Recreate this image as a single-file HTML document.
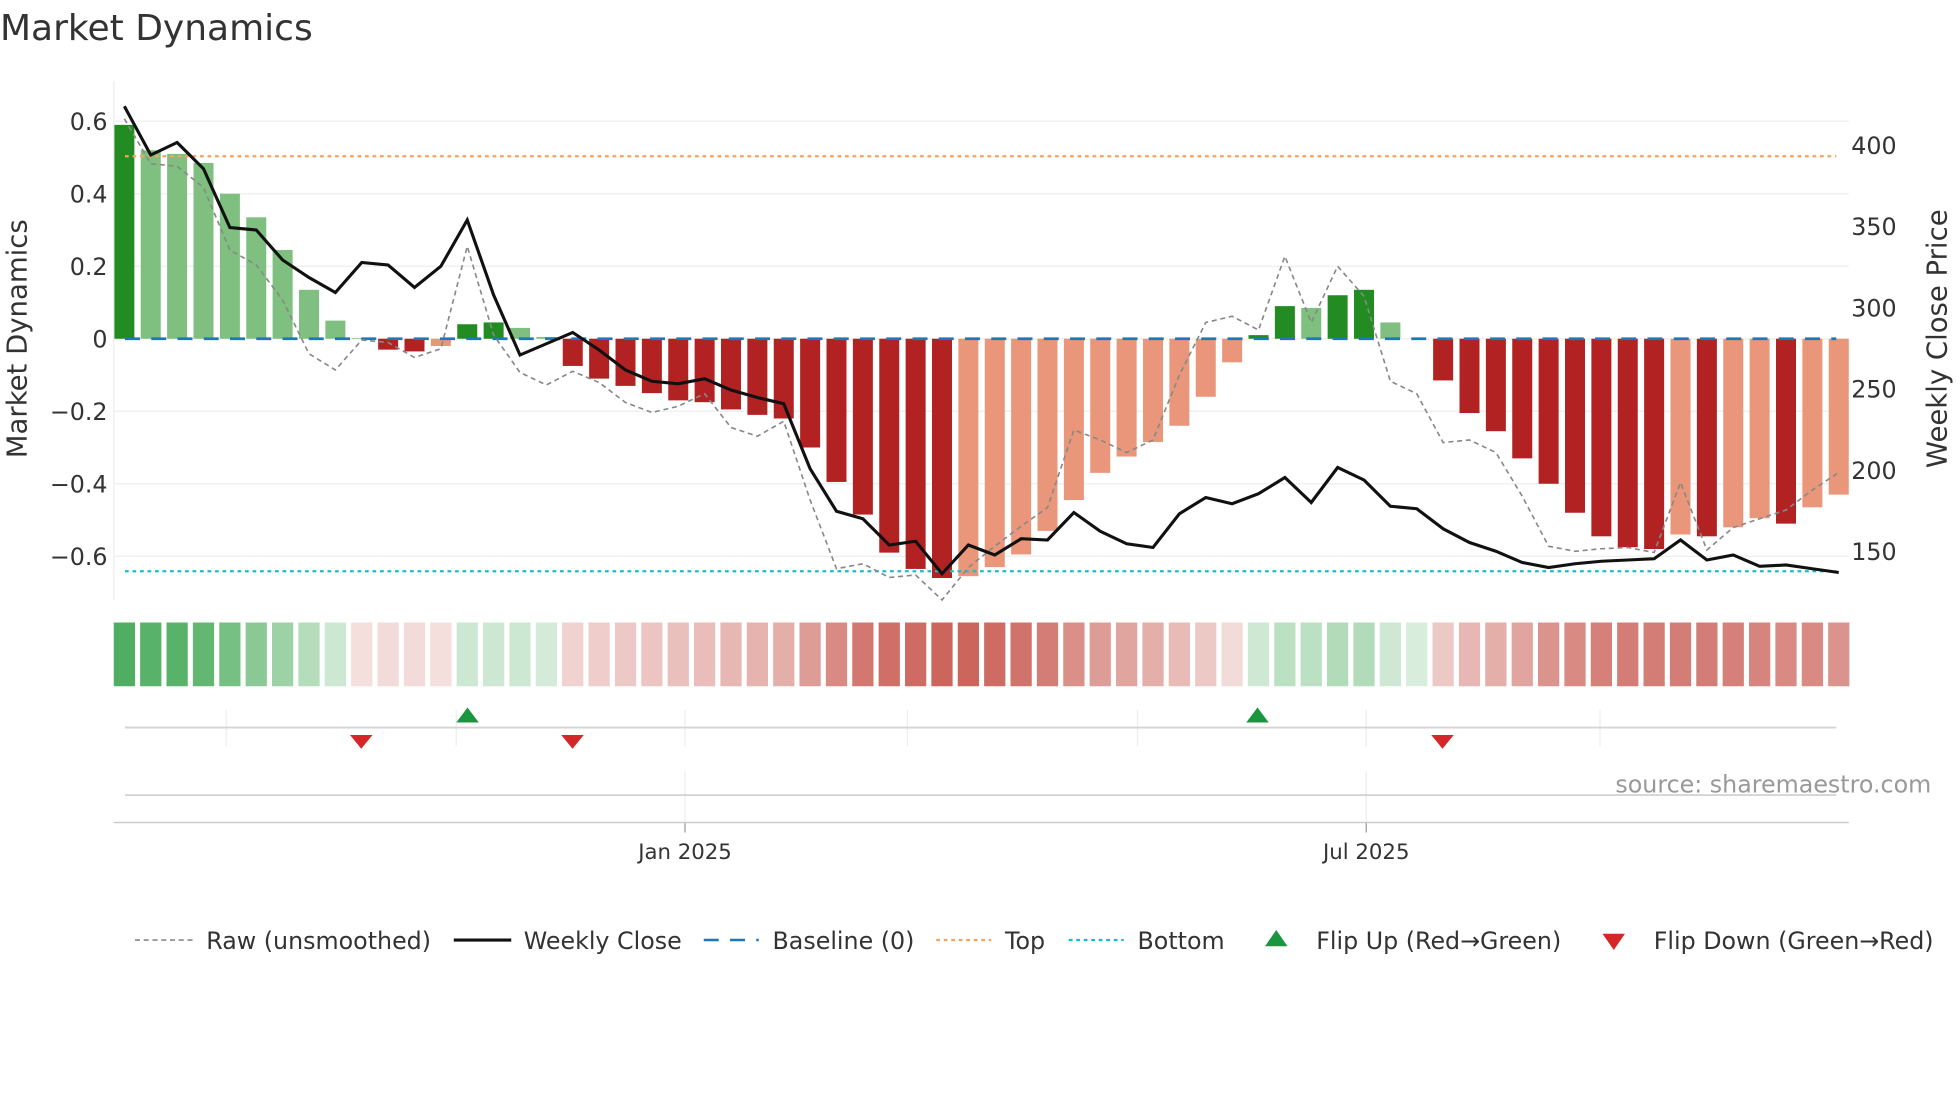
<!DOCTYPE html>
<html><head><meta charset="utf-8"><style>
html,body{margin:0;padding:0;background:#fff;overflow:hidden}
#w{width:1568px;height:882px;transform:scale(1.25);transform-origin:0 0;position:relative}
svg{position:absolute;left:0;top:0}
text{font-family:"DejaVu Sans","Liberation Sans",sans-serif;fill:#333}
</style></head><body><div id="w">
<svg id="s" width="1568" height="882" viewBox="0 0 1568 882" xmlns="http://www.w3.org/2000/svg">
<text x="0" y="32" font-size="28.8" fill="#333">Market Dynamics</text>
</svg></div>
<script>
var s=document.getElementById('s'),h='';
var X=function(i){return 99.5+21.1*i};
var Y=function(v){return 271-290*v};
[0.6,0.4,0.2,0,-0.2,-0.4,-0.6].forEach(function(v){h+='<line x1="91" x2="1479" y1="'+Y(v)+'" y2="'+Y(v)+'" stroke="#eee" stroke-width="1"/>';
h+='<text x="86" y="'+(Y(v)+7)+'" font-size="19" text-anchor="end">'+(v==0?'0':(v<0?'\u2212'+(-v).toFixed(1):v.toFixed(1)))+'</text>';});
h+='<line x1="91" x2="91" y1="65" y2="480" stroke="#eee"/>';
[400,350,300,250,200,150].forEach(function(p){var y=116+(400-p)*1.3;h+='<text x="1481" y="'+(y+7)+'" font-size="19">'+p+'</text>';});
h+='<text transform="translate(21,271) rotate(-90)" font-size="22" text-anchor="middle">Market Dynamics</text>';
h+='<text transform="translate(1557,271) rotate(-90)" font-size="22" text-anchor="middle">Weekly Close Price</text>';
var vals=[0.59,0.52,0.51,0.485,0.40,0.335,0.245,0.135,0.05,0.002,-0.03,-0.035,-0.02,0.04,0.045,0.03,0.005,-0.075,-0.11,-0.13,-0.15,-0.17,-0.175,-0.195,-0.21,-0.22,-0.30,-0.395,-0.485,-0.59,-0.635,-0.66,-0.655,-0.63,-0.595,-0.53,-0.445,-0.37,-0.325,-0.285,-0.24,-0.16,-0.065,0.01,0.09,0.085,0.12,0.135,0.045,0,-0.115,-0.205,-0.255,-0.33,-0.40,-0.48,-0.545,-0.575,-0.58,-0.54,-0.545,-0.52,-0.495,-0.51,-0.465,-0.43];
var kind="GggggggggxRRSGGggRRRRRRRRRRRRRRRSSSSSSSSSSSGGgGGgxRRRRRRRRRSRSSRSS";
var col={G:'#228b22',g:'#7fbf7f',R:'#b22222',S:'#e9967a',x:'#7fbf7f'};
vals.forEach(function(v,i){var x=X(i)-8,y=Math.min(Y(v),271),hh=Math.abs(Y(v)-271);h+='<rect x="'+x+'" y="'+y+'" width="16" height="'+hh+'" fill="'+col[kind[i]]+'"/>';});
h+='<line x1="100" x2="1469" y1="125" y2="125" stroke="#f4a460" stroke-width="1.8" stroke-dasharray="3,3"/>';
h+='<line x1="100" x2="1469" y1="457" y2="457" stroke="#17becf" stroke-width="1.8" stroke-dasharray="3,3"/>';
h+='<line x1="100" x2="1469" y1="271" y2="271" stroke="#1f77b4" stroke-width="2.2" stroke-dasharray="12,9"/>';
var raw=[95,131,133,150,200,212,240,283,296,272,274,286,279,197,268,298,308,297,306,322,330,325,315,342,349,337,400,455,451,462,460,480,454,437,421,406,344,352,362,352,300,258,253,264,205,258,213,237,305,315,354,352,362,397,437,441,439,438,442,386,440,422,415,408,392,378];
var cl=[85,124,114,135,182,184,208,222,234,210,212,230,213,176,236,284,275,266,280,296,305,307,303,312,318,323,375,409,415,436,433,459,436,444,431,432,410,425,435,438,411,398,403,395,382,402,374,384,405,407,423,434,441,450,454,451,449,448,447,432,448,444,453,452,455,458];
function pl(a){return a.map(function(y,i){return X(i).toFixed(1)+','+y}).join(' ')}
h+='<polyline points="'+pl(raw)+'" fill="none" stroke="#888" stroke-width="1.3" stroke-dasharray="4,3"/>';
h+='<polyline points="'+pl(cl)+'" fill="none" stroke="#111" stroke-width="2.5"/>';
var op=[0.9,0.85,0.85,0.8,0.7,0.6,0.5,0.38,0.26,0.18,0.2,0.2,0.18,0.26,0.26,0.26,0.22,0.25,0.28,0.3,0.32,0.35,0.37,0.4,0.42,0.45,0.55,0.65,0.75,0.8,0.82,0.85,0.85,0.82,0.78,0.72,0.62,0.55,0.5,0.45,0.38,0.3,0.2,0.25,0.35,0.35,0.4,0.4,0.25,0.2,0.3,0.4,0.45,0.5,0.6,0.65,0.7,0.72,0.72,0.72,0.72,0.7,0.68,0.65,0.65,0.6];
var sg="GGGGGGGGGRRRRGGGGRRRRRRRRRRRRRRRRRRRRRRRRRRGGGGGGGRRRRRRRRRRRRRRRR";
op.forEach(function(o,i){var c=sg[i]=='G'?'rgb(60,165,80)':'rgb(195,75,65)';h+='<rect x="'+(X(i)-8.5)+'" y="498" width="17" height="51" fill="'+c+'" fill-opacity="'+o+'"/>';});
[181,365,548,726,910,1093,1280].forEach(function(x){h+='<line x1="'+x+'" x2="'+x+'" y1="568" y2="597" stroke="#eee"/>';});
h+='<line x1="100" x2="1469" y1="582" y2="582" stroke="#d4d4d4" stroke-width="1.5"/>';
[374,1006].forEach(function(x){h+='<polygon points="'+(x-9)+',578 '+(x+9)+',578 '+x+',566" fill="#1a9641"/>';});
[289,458,1154].forEach(function(x){h+='<polygon points="'+(x-9)+',588 '+(x+9)+',588 '+x+',599" fill="#d62728"/>';});
[548,1093].forEach(function(x){h+='<line x1="'+x+'" x2="'+x+'" y1="617" y2="658" stroke="#eee"/><line x1="'+x+'" x2="'+x+'" y1="658" y2="666" stroke="#999"/>';});
h+='<line x1="100" x2="1469" y1="636" y2="636" stroke="#d4d4d4" stroke-width="1.5"/>';
h+='<line x1="91" x2="1479" y1="658" y2="658" stroke="#ccc" stroke-width="1.2"/>';
h+='<text x="548" y="687" font-size="17" text-anchor="middle">Jan 2025</text><text x="1093" y="687" font-size="17" text-anchor="middle">Jul 2025</text>';
h+='<text x="1545" y="634" font-size="19" text-anchor="end" style="fill:#999">source: sharemaestro.com</text>';
var ly=752;
h+='<line x1="108" x2="154" y1="'+ly+'" y2="'+ly+'" stroke="#888" stroke-width="1.3" stroke-dasharray="4,3"/><text x="165" y="'+(ly+7)+'" font-size="19">Raw (unsmoothed)</text>';
h+='<line x1="363" x2="409" y1="'+ly+'" y2="'+ly+'" stroke="#111" stroke-width="2.5"/><text x="419" y="'+(ly+7)+'" font-size="19">Weekly Close</text>';
h+='<line x1="563" x2="607" y1="'+ly+'" y2="'+ly+'" stroke="#1f77b4" stroke-width="2" stroke-dasharray="12,9"/><text x="618" y="'+(ly+7)+'" font-size="19">Baseline (0)</text>';
h+='<line x1="749" x2="793" y1="'+ly+'" y2="'+ly+'" stroke="#f4a460" stroke-width="1.8" stroke-dasharray="3,3"/><text x="804" y="'+(ly+7)+'" font-size="19">Top</text>';
h+='<line x1="855" x2="899" y1="'+ly+'" y2="'+ly+'" stroke="#17becf" stroke-width="1.8" stroke-dasharray="3,3"/><text x="910" y="'+(ly+7)+'" font-size="19">Bottom</text>';
h+='<polygon points="1012,757 1030,757 1021,744" fill="#1a9641"/><text x="1053" y="'+(ly+7)+'" font-size="19">Flip Up (Red\u2192Green)</text>';
h+='<polygon points="1282,747 1300,747 1291,760" fill="#d62728"/><text x="1323" y="'+(ly+7)+'" font-size="19">Flip Down (Green\u2192Red)</text>';
s.insertAdjacentHTML('beforeend',h);
</script></body></html>
